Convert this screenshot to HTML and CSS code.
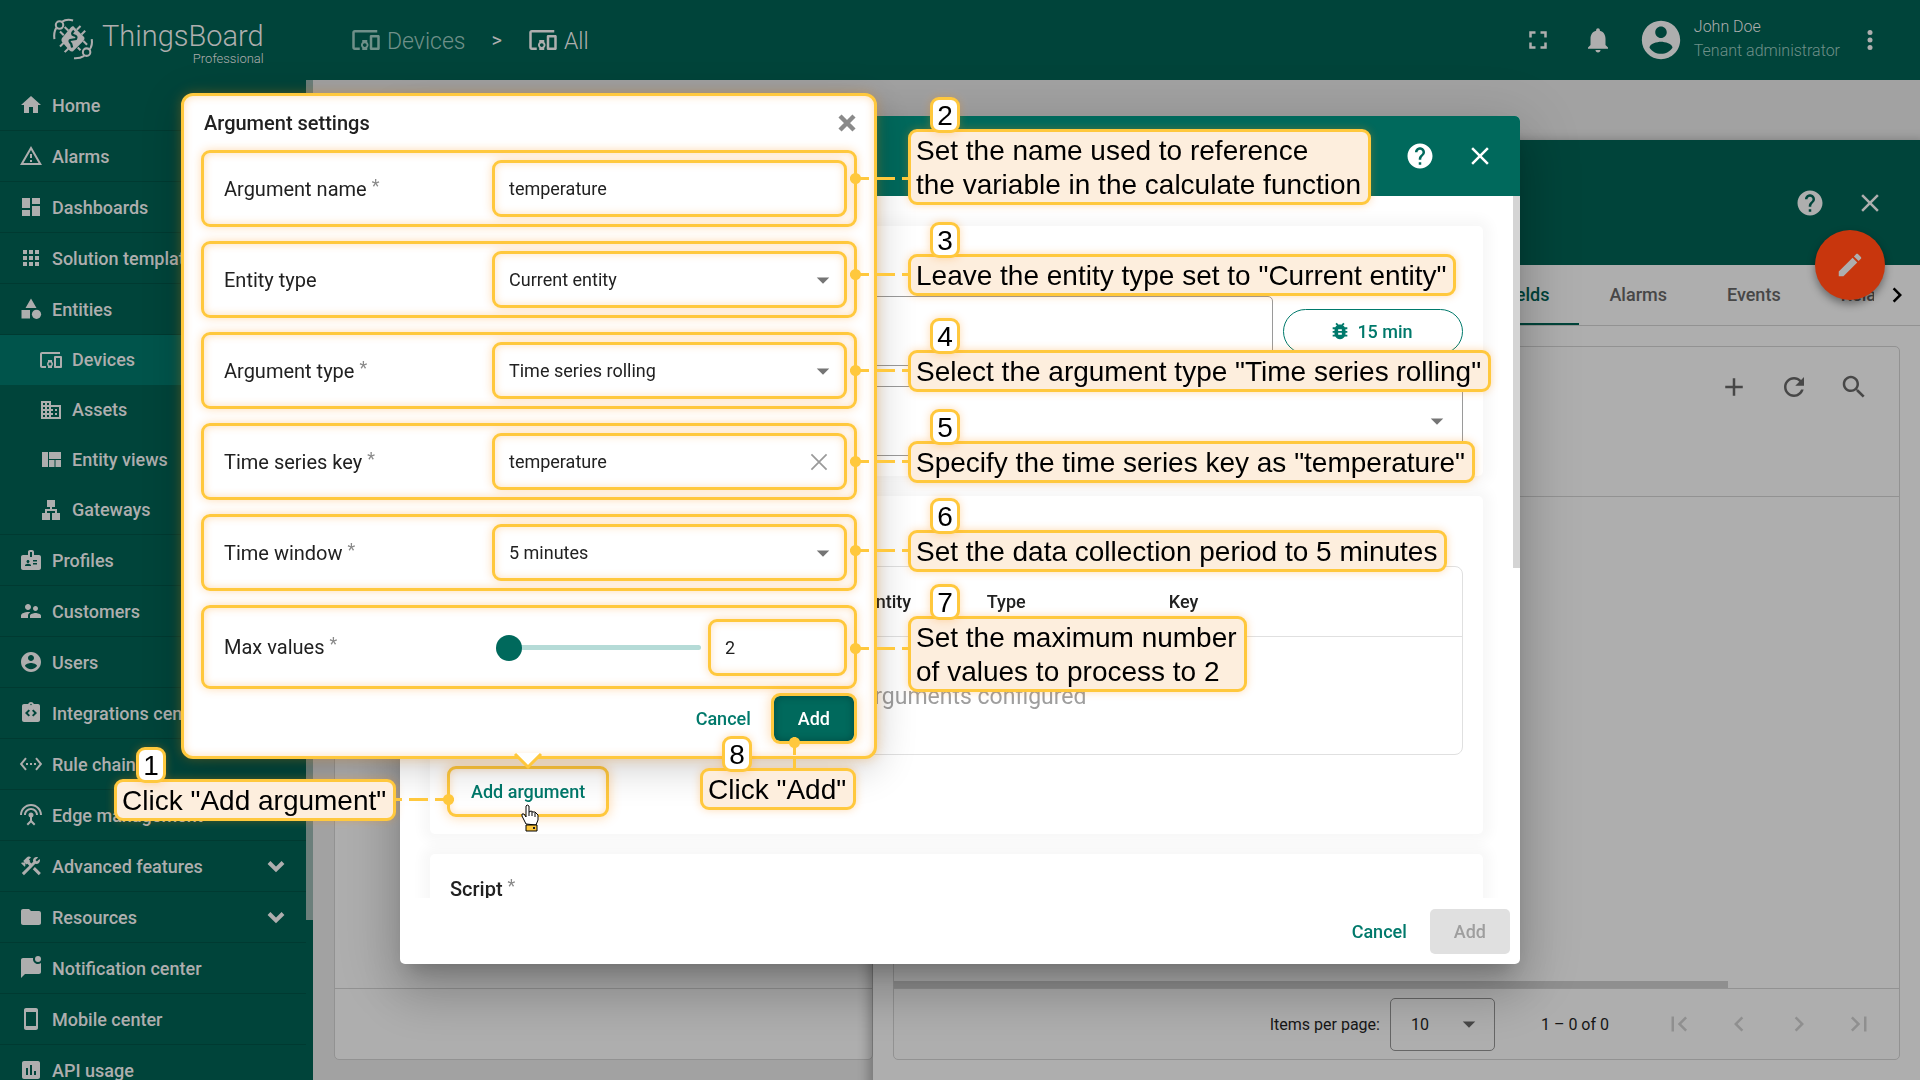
FILE: index.html
```html
<!DOCTYPE html>
<html lang="en">
<head>
<meta charset="utf-8">
<title>ThingsBoard – Argument settings</title>
<link rel="stylesheet" href="styles.css">
</head>
<body>
<svg class="sprite" aria-hidden="true">
  <symbol id="home" viewBox="0 0 24 24"><path d="M10 20v-6h4v6h5v-8h3L12 3 2 12h3v8z"/></symbol>
  <symbol id="warning" viewBox="0 0 24 24"><path d="M1 21h22L12 2 1 21zm3.47-2L12 5.99 19.53 19H4.47zM11 16h2v2h-2zm0-6h2v4h-2z"/></symbol>
  <symbol id="dashboard" viewBox="0 0 24 24"><path d="M3 13h8V3H3v10zm0 8h8v-6H3v6zm10 0h8V11h-8v10zm0-18v6h8V3h-8z"/></symbol>
  <symbol id="apps" viewBox="0 0 24 24"><path d="M4 8h4V4H4v4zm6 12h4v-4h-4v4zm-6 0h4v-4H4v4zm0-6h4v-4H4v4zm6 0h4v-4h-4v4zm6-10v4h4V4h-4zm-6 4h4V4h-4v4zm6 6h4v-4h-4v4zm0 6h4v-4h-4v4z"/></symbol>
  <symbol id="category" viewBox="0 0 24 24"><path d="M12 1.500l-5.500 9.500h11zM2.500 13h8.500v8.500H2.500z"/><circle cx="17.500" cy="17.300" r="4.600"/></symbol>
  <symbol id="devices" viewBox="0 0 24 24"><path d="M3 6h18V4H3c-1.100 0-2 .9-2 2v12c0 1.100.9 2 2 2h4v-2H3V6zm10 6H9v1.780c-.61.55-1 1.330-1 2.220s.39 1.670 1 2.220V20h4v-1.780c.61-.55 1-1.340 1-2.220s-.39-1.670-1-2.220V12zm-2 5.500c-.83 0-1.500-.67-1.500-1.500s.67-1.500 1.500-1.500 1.500.67 1.500 1.500-.67 1.500-1.500 1.500zM22 8h-6c-.5 0-1 .5-1 1v10c0 .5.5 1 1 1h6c.5 0 1-.5 1-1V9c0-.5-.5-1-1-1zm-1 10h-4v-8h4v8z"/></symbol>
  <symbol id="domain" viewBox="0 0 24 24"><path d="M12 7V3H2v18h20V7H12zM6 19H4v-2h2v2zm0-4H4v-2h2v2zm0-4H4V9h2v2zm0-4H4V5h2v2zm4 12H8v-2h2v2zm0-4H8v-2h2v2zm0-4H8V9h2v2zm0-4H8V5h2v2zm10 12h-8v-2h2v-2h-2v-2h2v-2h-2V9h8v10zm-2-8h-2v2h2v-2zm0 4h-2v2h2v-2z"/></symbol>
  <symbol id="quilt" viewBox="0 0 24 24"><path d="M3 4h6v15H3zM10 4h12v7H10zM10 12h5.500v7H10zM16.500 12H22v7h-5.500z"/></symbol>
  <symbol id="lan" viewBox="0 0 24 24"><path d="M13 22h8v-7h-3v-4h-5V9h3V2H8v7h3v2H6v4H3v7h8v-7H8v-2h8v2h-3z"/></symbol>
  <symbol id="badge" viewBox="0 0 24 24"><path d="M20 7h-5V4c0-1.100-.9-2-2-2h-2c-1.100 0-2 .9-2 2v3H4c-1.100 0-2 .9-2 2v11c0 1.100.9 2 2 2h16c1.100 0 2-.9 2-2V9c0-1.100-.9-2-2-2zM9 12c.83 0 1.500.67 1.500 1.500S9.830 15 9 15s-1.500-.67-1.500-1.500S8.170 12 9 12zm3 6H6v-.75c0-1 2-1.500 3-1.500s3 .5 3 1.500V18zm1-9h-2V4h2v5zm5 7.500h-4V15h4v1.500zm0-3h-4V12h4v1.500z"/></symbol>
  <symbol id="people" viewBox="0 0 24 24"><path d="M16.500 12c1.380 0 2.490-1.120 2.490-2.500S17.880 7 16.500 7C15.120 7 14 8.120 14 9.500s1.120 2.500 2.500 2.500zM9 11c1.660 0 2.990-1.340 2.990-3S10.660 5 9 5C7.340 5 6 6.340 6 8s1.340 3 3 3zm7.500 3c-1.830 0-5.500.92-5.500 2.750V19h11v-2.250c0-1.830-3.670-2.750-5.500-2.750zM9 13c-2.330 0-7 1.170-7 3.500V19h7v-2.250c0-.85.33-2.340 2.370-3.470C10.500 13.100 9.660 13 9 13z"/></symbol>
  <symbol id="account" viewBox="0 0 24 24"><path d="M12 2C6.480 2 2 6.480 2 12s4.480 10 10 10 10-4.480 10-10S17.520 2 12 2zm0 3c1.660 0 3 1.340 3 3s-1.340 3-3 3-3-1.340-3-3 1.340-3 3-3zm0 14.200c-2.500 0-4.710-1.280-6-3.220.03-1.990 4-3.080 6-3.080 1.990 0 5.970 1.090 6 3.080-1.290 1.940-3.500 3.220-6 3.220z"/></symbol>
  <symbol id="integration" viewBox="0 0 24 24"><path fill-rule="evenodd" d="M19 3h-4.180C14.400 1.840 13.300 1 12 1s-2.400.84-2.820 2H5c-1.100 0-2 .9-2 2v14c0 1.100.9 2 2 2h14c1.100 0 2-.9 2-2V5c0-1.100-.9-2-2-2zM11 14.170l-1.410 1.420L6 12l3.590-3.590L11 9.830 8.830 12 11 14.170zM12 4.250c-.41 0-.75-.34-.75-.75s.34-.75.75-.75.75.34.75.75-.34.75-.75.75zm2.410 11.340L13 14.170 15.170 12 13 9.830l1.410-1.420L18 12l-3.590 3.590z"/></symbol>
  <symbol id="rule" viewBox="0 0 24 24"><path d="M7.770 6.760L6.230 5.480.82 12l5.410 6.520 1.540-1.280L3.420 12l4.350-5.240zM7 13h2v-2H7v2zm10-2h-2v2h2v-2zm-6 2h2v-2h-2v2zm6.770-7.520l-1.540 1.280L20.580 12l-4.350 5.240 1.540 1.280L23.180 12l-5.410-6.520z"/></symbol>
  <symbol id="antenna" viewBox="0 0 24 24"><path d="M12 5c-3.870 0-7 3.130-7 7h2c0-2.760 2.240-5 5-5s5 2.240 5 5h2c0-3.870-3.130-7-7-7zm1 9.290c.88-.39 1.500-1.260 1.500-2.290 0-1.380-1.120-2.500-2.500-2.500S9.500 10.620 9.500 12c0 1.020.62 1.900 1.500 2.290v3.300L7.590 21 9 22.410l3-3 3 3L16.410 21 13 17.590v-3.300zM12 1C5.930 1 1 5.930 1 12h2c0-4.970 4.030-9 9-9s9 4.030 9 9h2c0-6.070-4.930-11-11-11z"/></symbol>
  <symbol id="tools" viewBox="0 0 24 24"><path d="M13.780 15.170l2.120-2.120 6 6-2.120 2.120zM17.500 10c1.930 0 3.500-1.570 3.500-3.500 0-.58-.16-1.120-.41-1.600l-2.700 2.700-1.490-1.490 2.700-2.700c-.48-.25-1.020-.41-1.600-.41C15.570 3 14 4.570 14 6.500c0 .41.08.8.21 1.160l-1.850 1.850-1.780-1.780.71-.71-1.410-1.410L12 3.490c-1.170-1.170-3.070-1.170-4.240 0L4.220 7.030l1.410 1.410H2.810l-.71.71 3.540 3.540.71-.71V9.150l1.410 1.410.71-.71 1.780 1.780-7.410 7.410 2.120 2.120L16.340 9.790c.36.13.75.21 1.160.21z"/></symbol>
  <symbol id="folder" viewBox="0 0 24 24"><path d="M10 4H4c-1.100 0-2 .9-2 2v12c0 1.100.9 2 2 2h16c1.100 0 2-.9 2-2V8c0-1.100-.9-2-2-2h-8l-2-2z"/></symbol>
  <symbol id="chat" viewBox="0 0 24 24"><path d="M22 6.980V16c0 1.100-.9 2-2 2H6l-4 4V4c0-1.100.9-2 2-2h10.100A5 5 0 0 0 22 6.980z"/><circle cx="19" cy="3" r="3"/></symbol>
  <symbol id="phone" viewBox="0 0 24 24"><path d="M17 1H7c-1.100 0-2 .9-2 2v18c0 1.100.9 2 2 2h10c1.100 0 2-.9 2-2V3c0-1.100-.9-2-2-2zm0 18H7V5h10v14z"/></symbol>
  <symbol id="chart" viewBox="0 0 24 24"><path d="M19 3H5c-1.100 0-2 .9-2 2v14c0 1.100.9 2 2 2h14c1.100 0 2-.9 2-2V5c0-1.100-.9-2-2-2zM9 17H7v-7h2v7zm4 0h-2V7h2v10zm4 0h-2v-4h2v4z"/></symbol>
  <symbol id="chevron-down" viewBox="0 0 24 24"><path d="M5 8.500l7 7 7-7" fill="none" stroke="currentColor" stroke-width="4"/></symbol>
  <symbol id="fullscreen" viewBox="0 0 24 24"><path d="M7 14H5v5h5v-2H7v-3zm-2-4h2V7h3V5H5v5zm12 7h-3v2h5v-5h-2v3zM14 5v2h3v3h2V5h-5z"/></symbol>
  <symbol id="bell" viewBox="0 0 24 24"><path d="M12 22c1.100 0 2-.9 2-2h-4c0 1.100.89 2 2 2zm6-6v-5c0-3.070-1.640-5.640-4.500-6.320V4c0-.83-.67-1.500-1.500-1.500s-1.500.67-1.500 1.500v.68C7.630 5.360 6 7.920 6 11v5l-2 2v1h16v-1l-2-2z"/></symbol>
  <symbol id="more" viewBox="0 0 24 24"><circle cx="12" cy="6" r="2"/><circle cx="12" cy="12" r="2"/><circle cx="12" cy="18" r="2"/></symbol>
  <symbol id="help" viewBox="0 0 24 24"><path d="M12 2C6.480 2 2 6.480 2 12s4.480 10 10 10 10-4.480 10-10S17.520 2 12 2zm1 17h-2v-2h2v2zm2.070-7.750l-.9.92C13.450 12.900 13 13.500 13 15h-2v-.5c0-1.100.45-2.100 1.170-2.830l1.240-1.260c.37-.36.59-.86.59-1.410 0-1.100-.9-2-2-2s-2 .9-2 2H8c0-2.210 1.790-4 4-4s4 1.790 4 4c0 .88-.36 1.680-.93 2.250z"/></symbol>
  <symbol id="close" viewBox="0 0 24 24"><path d="M19 6.410L17.590 5 12 10.590 6.410 5 5 6.410 10.590 12 5 17.590 6.410 19 12 13.410 17.590 19 19 17.590 13.410 12z"/></symbol>
  <symbol id="close-thin" viewBox="0 0 24 24"><path d="M5 5l14 14M19 5L5 19" fill="none" stroke="currentColor" stroke-width="1.600"/></symbol>
  <symbol id="close-bold" viewBox="0 0 24 24"><path d="M5 5l14 14M19 5L5 19" fill="none" stroke="currentColor" stroke-width="4.400"/></symbol>
  <symbol id="edit" viewBox="0 0 24 24"><path d="M3 17.250V21h3.750L17.810 9.940l-3.750-3.750L3 17.250zM20.710 7.040c.39-.39.39-1.020 0-1.410l-2.340-2.340c-.39-.39-1.020-.39-1.410 0l-1.830 1.830 3.750 3.750 1.830-1.830z"/></symbol>
  <symbol id="add" viewBox="0 0 24 24"><path d="M19 13h-6v6h-2v-6H5v-2h6V5h2v6h6v2z"/></symbol>
  <symbol id="refresh" viewBox="0 0 24 24"><path d="M17.650 6.350C16.200 4.900 14.210 4 12 4c-4.420 0-7.990 3.580-7.990 8s3.570 8 7.990 8c3.730 0 6.840-2.550 7.730-6h-2.080c-.82 2.330-3.040 4-5.650 4-3.310 0-6-2.690-6-6s2.690-6 6-6c1.660 0 3.140.69 4.220 1.780L13 11h7V4l-2.350 2.350z"/></symbol>
  <symbol id="search" viewBox="0 0 24 24"><path d="M15.500 14h-.79l-.28-.27C15.410 12.590 16 11.110 16 9.500 16 5.910 13.090 3 9.500 3S3 5.910 3 9.500 5.910 16 9.500 16c1.610 0 3.090-.59 4.230-1.570l.27.28v.79l5 4.990L20.490 19l-4.990-5zm-6 0C7.010 14 5 11.990 5 9.500S7.010 5 9.500 5 14 7.010 14 9.500 11.990 14 9.500 14z"/></symbol>
  <symbol id="first" viewBox="0 0 24 24"><path d="M18.410 16.590L13.820 12l4.590-4.590L17 6l-6 6 6 6zM6 6h2v12H6z"/></symbol>
  <symbol id="prev" viewBox="0 0 24 24"><path d="M15.410 7.410L14 6l-6 6 6 6 1.410-1.410L10.830 12z"/></symbol>
  <symbol id="next" viewBox="0 0 24 24"><path d="M10 6L8.590 7.410 13.170 12l-4.580 4.590L10 18l6-6z"/></symbol>
  <symbol id="last" viewBox="0 0 24 24"><path d="M5.590 7.410L10.180 12l-4.590 4.590L7 18l6-6-6-6zM16 6h2v12h-2z"/></symbol>
  <symbol id="arrow" viewBox="0 0 24 24"><path d="M7 10l5 5 5-5z"/></symbol>
  <symbol id="bug" viewBox="0 0 24 24"><path d="M20 8h-2.810c-.45-.78-1.070-1.450-1.820-1.960L17 4.410 15.590 3l-2.170 2.170C12.960 5.060 12.490 5 12 5s-.96.06-1.410.17L8.410 3 7 4.410l1.620 1.630C7.880 6.550 7.260 7.220 6.810 8H4v2h2.090c-.05.33-.09.66-.09 1v1H4v2h2v1c0 .34.04.67.09 1H4v2h2.810c1.040 1.790 2.970 3 5.190 3s4.150-1.210 5.190-3H20v-2h-2.090c.05-.33.09-.66.09-1v-1h2v-2h-2v-1c0-.34-.04-.67-.09-1H20V8zm-6 8h-4v-2h4v2zm0-4h-4v-2h4v2z"/></symbol>
</svg>

<div class="app">
  <header class="topbar">
    <a class="brand" href="#">
      <svg class="brand-mark" viewBox="0 0 60 60">
        <g fill="none" stroke="currentColor" stroke-width="2.200">
          <circle cx="14.500" cy="14" r="4"/><path d="M17 10.500Q22 7 29 9M11 17Q8 22 9 29"/>
          <circle cx="43.500" cy="43" r="4"/><path d="M41 47Q36 50 30 49.500M47 40Q50 35 49 29"/>
          <path d="M24 20l-4-4M19 25l-4-4M33 19l4-4M38 24l4-4M40 31l4 4M34 38l3 3M24 39l-4 4M19 33l-4 4"/>
        </g>
        <path d="M29 15l12 12q1 2-1 4L29 42q-2 1-4-1l-8-9q-1-2 0-4l10-12z"/>
        <path d="M30 20q-4 4 0 5t2 4l-6 1q-2 1 1 4l1 4" fill="none" stroke="#00443a" stroke-width="2.400"/>
      </svg>
      <span class="brand-text"><span class="brand-name">ThingsBoard</span><span class="brand-tier">Professional</span></span>
    </a>
    <nav class="crumbs">
      <a class="crumb faded" href="#"><svg><use href="#devices"/></svg><span>Devices</span></a>
      <span class="crumb-sep">&gt;</span>
      <a class="crumb" href="#"><svg><use href="#devices"/></svg><span>All</span></a>
    </nav>
    <div class="top-actions">
      <button class="icon-btn" aria-label="Fullscreen"><svg class="i30"><use href="#fullscreen"/></svg></button>
      <button class="icon-btn" aria-label="Notifications"><svg class="i30"><use href="#bell"/></svg></button>
      <div class="user">
        <svg class="avatar"><use href="#account"/></svg>
        <div class="user-text"><span>John Doe</span><span class="faded">Tenant administrator</span></div>
      </div>
      <button class="icon-btn" aria-label="More"><svg class="i30"><use href="#more"/></svg></button>
    </div>
  </header>

  <div class="workspace">
    <aside class="sidebar">
      <nav class="menu">
        <a class="item" href="#"><svg><use href="#home"/></svg>Home</a>
        <a class="item" href="#"><svg><use href="#warning"/></svg>Alarms</a>
        <a class="item" href="#"><svg><use href="#dashboard"/></svg>Dashboards</a>
        <a class="item" href="#"><svg><use href="#apps"/></svg>Solution templates</a>
        <a class="item" href="#"><svg><use href="#category"/></svg>Entities</a>
        <a class="item sub active" href="#"><svg><use href="#devices"/></svg>Devices</a>
        <a class="item sub" href="#"><svg><use href="#domain"/></svg>Assets</a>
        <a class="item sub" href="#"><svg><use href="#quilt"/></svg>Entity views</a>
        <a class="item sub end" href="#"><svg><use href="#lan"/></svg>Gateways</a>
        <a class="item" href="#"><svg><use href="#badge"/></svg>Profiles</a>
        <a class="item" href="#"><svg><use href="#people"/></svg>Customers</a>
        <a class="item" href="#"><svg><use href="#account"/></svg>Users</a>
        <a class="item" href="#"><svg><use href="#integration"/></svg>Integrations center</a>
        <a class="item" href="#"><svg><use href="#rule"/></svg>Rule chains</a>
        <a class="item" href="#"><svg><use href="#antenna"/></svg>Edge management<svg class="more"><use href="#chevron-down"/></svg></a>
        <a class="item" href="#"><svg><use href="#tools"/></svg>Advanced features<svg class="more"><use href="#chevron-down"/></svg></a>
        <a class="item" href="#"><svg><use href="#folder"/></svg>Resources<svg class="more"><use href="#chevron-down"/></svg></a>
        <a class="item" href="#"><svg><use href="#chat"/></svg>Notification center</a>
        <a class="item" href="#"><svg><use href="#phone"/></svg>Mobile center</a>
        <a class="item" href="#"><svg><use href="#chart"/></svg>API usage</a>
      </nav>
      <div class="rail"><div class="rail-thumb"></div></div>
    </aside>

    <main class="content">
      <section class="list-card"><div class="list-body"></div><div class="list-footer"></div></section>
      <section class="details">
        <header class="details-head">
          <button class="icon-btn" aria-label="Help"><svg class="i30"><use href="#help"/></svg></button>
          <button class="icon-btn" aria-label="Close"><svg class="i30"><use href="#close"/></svg></button>
          <button class="fab" aria-label="Edit"><svg class="i30"><use href="#edit"/></svg></button>
        </header>
        <div class="tabs">
          <div class="tab-strip">
            <button class="tab on">Calculated fields</button><button class="tab">Alarms</button><button class="tab">Events</button><button class="tab">Relations</button>
          </div>
          <button class="icon-btn tab-next" aria-label="Next tabs"><svg class="i30"><use href="#next"/></svg></button>
        </div>
        <div class="details-card">
          <div class="tools">
            <button class="icon-btn" aria-label="Add"><svg class="i30"><use href="#add"/></svg></button>
            <button class="icon-btn" aria-label="Refresh"><svg class="i30"><use href="#refresh"/></svg></button>
            <button class="icon-btn" aria-label="Search"><svg class="i30"><use href="#search"/></svg></button>
          </div>
          <div class="rows"><div class="hbar"></div></div>
          <footer class="pager">
            <label for="page-size">Items per page:</label>
            <span class="page-size"><select id="page-size"><option>10</option></select><svg class="i30"><use href="#arrow"/></svg></span>
            <span class="range">1 – 0 of 0</span>
            <div class="pager-btns">
              <button class="icon-btn" aria-label="First page"><svg class="i30"><use href="#first"/></svg></button>
              <button class="icon-btn" aria-label="Previous page"><svg class="i30"><use href="#prev"/></svg></button>
              <button class="icon-btn" aria-label="Next page"><svg class="i30"><use href="#next"/></svg></button>
              <button class="icon-btn" aria-label="Last page"><svg class="i30"><use href="#last"/></svg></button>
            </div>
          </footer>
        </div>
      </section>
    </main>
  </div>
</div>

<div class="overlay">
  <div class="dialog" role="dialog">
    <header class="dialog-head">
      <button class="icon-btn" aria-label="Help"><svg class="i30"><use href="#help"/></svg></button>
      <button class="icon-btn" aria-label="Close"><svg class="i30"><use href="#close"/></svg></button>
    </header>
    <div class="dialog-body">
      <div class="cards">
        <section class="card">
          <div class="card-title"></div>
          <div class="title-row">
            <input class="field" type="text" aria-label="Title">
            <button class="pill"><svg><use href="#bug"/></svg>15 min</button>
          </div>
          <span class="field-wrap"><select class="field" aria-label="Type"><option></option></select><svg class="i30"><use href="#arrow"/></svg></span>
        </section>
        <section class="card">
          <div class="card-title"></div>
          <div class="table-box">
            <table>
              <thead><tr><th class="c-name"></th><th class="c-entity">Entity</th><th class="c-type">Type</th><th class="c-key">Key</th></tr></thead>
              <tbody><tr><td colspan="4">No arguments configured</td></tr></tbody>
            </table>
          </div>
          <button class="btn text marked add-argument">Add argument</button>
        </section>
        <section class="card script"><h3>Script <span class="req">*</span></h3></section>
      </div>
      <div class="rail light"><div class="rail-thumb"></div></div>
    </div>
    <footer class="dialog-foot">
      <button class="btn text">Cancel</button>
      <button class="btn" disabled>Add</button>
    </footer>

    <form class="popup">
      <header class="popup-head"><h2>Argument settings</h2><button type="button" class="icon-btn" aria-label="Close"><svg class="i24"><use href="#close-bold"/></svg></button></header>
      <div class="settings">
        <div class="row"><label for="arg-name">Argument name <span class="req">*</span></label><span class="box"><input id="arg-name" type="text" value="temperature"></span></div>
        <div class="row"><label for="entity-type">Entity type</label><span class="box"><select id="entity-type"><option>Current entity</option></select><svg class="i30"><use href="#arrow"/></svg></span></div>
        <div class="row"><label for="arg-type">Argument type <span class="req">*</span></label><span class="box"><select id="arg-type"><option>Time series rolling</option></select><svg class="i30"><use href="#arrow"/></svg></span></div>
        <div class="row"><label for="ts-key">Time series key <span class="req">*</span></label><span class="box"><input id="ts-key" type="text" value="temperature"><svg class="clear"><use href="#close-thin"/></svg></span></div>
        <div class="row"><label for="window">Time window <span class="req">*</span></label><span class="box"><select id="window"><option>5 minutes</option></select><svg class="i30"><use href="#arrow"/></svg></span></div>
        <div class="row tall"><label for="max-values">Max values <span class="req">*</span></label><input class="slider" type="range" min="2" max="1000" value="2" aria-label="Max values slider"><span class="box small"><input id="max-values" type="text" value="2"></span></div>
      </div>
      <footer class="popup-foot"><button type="button" class="btn text">Cancel</button><button type="button" class="btn primary marked">Add</button></footer>
      <svg class="popup-tip" viewBox="0 0 28 16"><path d="M1 -3L14 10 27 -3z" fill="#fff"/><path d="M1 -2L14 11 27 -2" fill="none" stroke="#ffc83d" stroke-width="3"/></svg>
    </form>

    <div class="callout s1">Click "Add argument"<span class="num">1</span><i class="link right"></i></div>
    <div class="callout s2">Set the name used to reference<br>the variable in the calculate function<span class="num">2</span><i class="link"></i></div>
    <div class="callout s3">Leave the entity type set to "Current entity"<span class="num">3</span><i class="link"></i></div>
    <div class="callout s4">Select the argument type "Time series rolling"<span class="num">4</span><i class="link"></i></div>
    <div class="callout s5">Specify the time series key as "temperature"<span class="num">5</span><i class="link"></i></div>
    <div class="callout s6">Set the data collection period to 5 minutes<span class="num">6</span><i class="link"></i></div>
    <div class="callout s7">Set the maximum number<br>of values to process to 2<span class="num">7</span><i class="link"></i></div>
    <div class="callout s8">Click "Add"<span class="num">8</span><i class="link up"></i></div>

    <svg class="pointer" viewBox="0 0 18 28">
      <path d="M5 20L1 12q-1-3 2-2l2 3V2q1-2 3 0v6l2-1 2 1 2 0 2 2 1 1v5l-2 5z" fill="#fff" stroke="#000" stroke-width="1"/>
      <path d="M8 8v4M11 8v4M14 9v4" stroke="#000" fill="none"/>
      <path d="M5 21h11v6H5z" fill="#ffc83d" stroke="#000"/><path d="M12 23h2v2h-2z"/>
    </svg>
  </div>
</div>
</body>
</html>
```

FILE: styles.css
```css
:root {
  --green: #00695c;
  --green-text: #00796b;
  --green-dim: #00443a;
  --dim-white: #aeaeae;
  --dim-page: #a2a2a2;
  --dim-line: #929292;
  --mark: #ffc83d;
  --glow: rgba(255, 140, 0, .3);
}

* { box-sizing: border-box; }

body {
  margin: 0;
  font-family: Roboto, "Liberation Sans", sans-serif;
  font-size: 18px;
  color: #212121;
  overflow: hidden;
}

button, input, select { font: inherit; color: inherit; background: none; border: 0; padding: 0; margin: 0; outline: 0; }
select { appearance: none; }
button { display: inline-flex; align-items: center; justify-content: center; }
a { color: inherit; text-decoration: none; }
svg { fill: currentColor; flex: none; display: block; }
h2, h3 { margin: 0; font-size: 20px; font-weight: 500; line-height: 24px; }

.sprite { position: absolute; width: 0; height: 0; }
.i30 { width: 30px; height: 30px; }
.i24 { width: 24px; height: 24px; }
.icon-btn { width: 60px; height: 60px; }

/* page */
.app { height: 100vh; display: flex; flex-direction: column; background: var(--dim-page); }

.topbar {
  height: 80px;
  flex: none;
  display: flex;
  align-items: center;
  background: var(--green-dim);
  color: var(--dim-white);
  padding: 0 20px 0 46px;
}
.brand { display: flex; align-items: center; width: 305px; }
.brand-mark { width: 56px; height: 60px; }
.brand-text { display: flex; flex-direction: column; align-items: flex-end; padding-top: 6px; }
.brand-name { font-size: 29px; font-weight: 300; line-height: 32px; }
.brand-tier { font-size: 13px; font-weight: 300; line-height: 14px; }
.crumbs { display: flex; align-items: center; font-size: 23px; font-weight: 300; }
.crumb { display: flex; align-items: center; gap: 6px; line-height: 30px; }
.crumb span { padding-top: 4px; }
.crumb svg { width: 30px; height: 30px; }
.crumb-sep { padding: 0 26px; font-size: 20px; font-weight: 400; line-height: 24px; }
.faded { color: #6f9089; }
.top-actions { margin-left: auto; display: flex; align-items: center; }
.user { display: flex; align-items: center; gap: 10px; padding: 0 0 0 10px; }
.avatar { width: 46px; height: 46px; }
.user-text { display: flex; flex-direction: column; font-size: 16px; font-weight: 300; line-height: 24px; padding-bottom: 2px; }

.workspace { flex: 1; min-height: 0; display: flex; }

.sidebar { width: 313px; flex: none; display: flex; background: var(--green-dim); color: var(--dim-white); overflow: hidden; }
.menu { flex: 1; min-width: 0; display: flex; flex-direction: column; font-weight: 500; }
.item {
  height: 51px;
  flex: none;
  display: flex;
  align-items: center;
  gap: 9px;
  padding: 0 18px 0 19px;
  border-bottom: 1px solid #003a31;
  white-space: nowrap;
}
.item svg { width: 24px; height: 24px; }
.item .more { margin-left: auto; }
.item.sub { height: 50px; padding-left: 39px; border-bottom-color: transparent; }
.item.end { border-bottom-color: #003a31; }
.item.active { background: #00544b; }
.rail { width: 7px; }
.rail-thumb { height: 84%; background: #6b7f7b; }

.content { flex: 1; position: relative; display: flex; padding: 60px 0 0 21px; }
.list-card {
  flex: 1;
  display: flex;
  flex-direction: column;
  margin-bottom: 20px;
  border: 1px solid var(--dim-line);
  border-radius: 5px;
  background: var(--dim-white);
}
.list-body { flex: 1; }
.list-footer { height: 71px; border-top: 1px solid var(--dim-line); }

.details {
  width: 66%;
  flex: none;
  display: flex;
  flex-direction: column;
  background: var(--dim-white);
  box-shadow: 0 5px 10px 5px rgba(0, 0, 0, .25);
}
.details-head {
  height: 125px;
  display: flex;
  justify-content: flex-end;
  padding: 33px 20px 0;
  background: var(--green-dim);
  color: var(--dim-white);
  position: relative;
}
.fab {
  position: absolute;
  right: 35px;
  bottom: -35px;
  width: 70px;
  height: 70px;
  border-radius: 50%;
  background: #c8360d;
  color: var(--dim-white);
  box-shadow: 0 4px 8px rgba(0, 0, 0, .4);
}
.tabs { height: 61px; display: flex; border-bottom: 1px solid var(--dim-line); }
.tab-strip { flex: 1; min-width: 0; display: flex; justify-content: flex-end; overflow: hidden; }
.tab { flex: none; padding: 0 30px 2px; font-weight: 500; color: #474747; }
.tab.on { color: var(--green-dim); box-shadow: inset 0 -2px var(--green-dim); }
.tab:last-child { margin-right: -72px; }
.tab-next { width: 46px; color: #000; }
.details-card {
  flex: 1;
  display: flex;
  flex-direction: column;
  margin: 20px 20px 20px;
  border: 1px solid var(--dim-line);
  border-radius: 5px;
}
.tools { display: flex; justify-content: flex-end; padding: 10px 15px 0 0; height: 150px; color: #474747; border-bottom: 1px solid var(--dim-line); }
.rows { flex: 1; display: flex; align-items: flex-end; }
.hbar { width: 83%; height: 7px; background: #8f8f8f; }
.pager {
  height: 71px;
  display: flex;
  align-items: center;
  justify-content: flex-end;
  border-top: 1px solid var(--dim-line);
  font-size: 16px;
  color: #161616;
  padding-right: 10px;
}
.page-size { display: flex; align-items: center; margin: 0 46px 0 10px; width: 105px; height: 53px; border: 1px solid #666; border-radius: 5px; position: relative; }
.page-size select { width: 100%; height: 100%; padding-left: 20px; }
.page-size svg { position: absolute; right: 10px; color: #474747; pointer-events: none; }
.pager-btns { display: flex; margin-left: 40px; color: #8f8f8f; }

/* dialog */
.overlay { position: fixed; inset: 0; display: grid; place-items: center; }
.dialog {
  position: relative;
  width: 1120px;
  max-width: 90vw;
  height: calc(100vh - 232px);
  display: flex;
  flex-direction: column;
  background: #fff;
  border-radius: 5px;
  box-shadow: 0 14px 19px -9px rgba(0, 0, 0, .2), 0 30px 48px 4px rgba(0, 0, 0, .14), 0 11px 58px 10px rgba(0, 0, 0, .12);
}
.dialog-head {
  height: 80px;
  flex: none;
  display: flex;
  align-items: center;
  justify-content: flex-end;
  padding-right: 10px;
  background: var(--green);
  color: #fff;
  border-radius: 5px 5px 0 0;
}
.dialog-body { flex: 1; min-height: 0; display: flex; overflow: hidden; }
.cards { flex: 1; display: flex; flex-direction: column; gap: 20px; padding: 30px; }
.card {
  flex: none;
  display: flex;
  flex-direction: column;
  align-items: stretch;
  padding: 20px;
  background: #fff;
  border-radius: 5px;
  box-shadow: 0 0 12px 8px rgba(0, 0, 0, .03);
}
.card-title { height: 50px; }
.title-row { display: flex; align-items: center; gap: 10px; margin-bottom: 20px; }
.field { flex: 1; width: 100%; height: 70px; border: 1px solid #9a9a9a; border-radius: 5px; padding: 0 20px; }
.field-wrap { position: relative; display: flex; align-items: center; }
.field-wrap svg { position: absolute; right: 11px; color: #757575; }
.pill { width: 180px; height: 45px; gap: 6px; padding-right: 4px; border: 1px solid var(--green-text); border-radius: 23px; color: var(--green-text); font-weight: 500; }
.pill svg { width: 22px; height: 22px; }
.table-box { border: 1px solid #e0e0e0; border-radius: 8px; margin-bottom: 14px; }
table { width: 100%; table-layout: fixed; border-collapse: collapse; }
th { height: 69px; padding: 0; text-align: left; font-weight: 500; border-bottom: 1px solid #e0e0e0; }
.c-name { width: 41%; }
.c-entity { width: 12%; }
.c-type { width: 18%; }
td { height: 118px; padding: 2px 0 0; text-align: center; font-size: 23px; color: #9e9e9e; }
.card.script { height: 480px; padding-top: 23px; }
.req { color: #8a8a8a; font-size: 18px; font-weight: 400; vertical-align: 4px; line-height: 12px; }
.rail.light .rail-thumb { height: 53%; background: #d4d4d4; }
.dialog-foot { height: 66px; flex: none; display: flex; justify-content: flex-end; gap: 2px; padding: 11px 10px 10px; }

.btn { height: 45px; padding: 0 24px; border-radius: 5px; font-size: 18px; font-weight: 500; }
.btn.text { color: var(--green-text); padding: 0 21px; }
.btn.primary { background: var(--green); color: #fff; }
.btn:disabled { background: #e0e0e0; color: #9e9e9e; }
.marked { outline: 3px solid var(--mark); box-shadow: 0 0 12px 4px var(--glow), inset 0 0 8px rgba(255, 140, 0, .25); border-radius: 6px; }
.primary.marked { box-shadow: 0 0 12px 4px var(--glow), inset 0 0 8px rgba(0, 0, 0, .3); }
.add-argument { align-self: flex-start; }

/* argument popup, floats beside the button that opens it */
.popup {
  position: absolute;
  left: -219px;
  top: -23px;
  width: 696px;
  border: 3px solid var(--mark);
  border-radius: 12px;
  padding: 0 17px 15px;
  background: #fff;
  box-shadow: 0 0 12px var(--glow), 0 8px 40px rgba(0, 0, 0, .2), inset 0 0 8px var(--glow);
}
.popup-head { height: 54px; display: flex; align-items: center; justify-content: space-between; padding: 0 0 0 3px; }
.popup-head .icon-btn { width: 20px; height: 24px; color: #8a8a8a; }
.settings { display: flex; flex-direction: column; gap: 14px; }
.row {
  height: 77px;
  display: flex;
  align-items: center;
  justify-content: space-between;
  padding: 0 7px 0 20px;
  border: 3px solid var(--mark);
  border-radius: 9px;
  box-shadow: 0 0 10px var(--glow), inset 0 0 8px var(--glow);
}
.row.tall { height: 84px; }
.row label { flex: 1; font-size: 20px; line-height: 24px; }
.box {
  position: relative;
  width: 355px;
  height: 57px;
  display: flex;
  align-items: center;
  border: 3px solid var(--mark);
  border-radius: 9px;
  background: #fff;
  box-shadow: 0 0 10px var(--glow), inset 0 0 8px rgba(255, 140, 0, .25);
}
.box.small { width: 139px; margin-left: 7px; }
.box input, .box select { width: 100%; height: 100%; padding-left: 14px; font-size: 18px; }
.box svg { position: absolute; right: 6px; color: #757575; pointer-events: none; }
.box .clear { width: 26px; height: 26px; right: 12px; color: #9a9a9a; }
.slider { appearance: none; width: 205px; height: 26px; }
.slider::-webkit-slider-runnable-track { height: 5px; border-radius: 3px; background: #b5dbd7; }
.slider::-webkit-slider-thumb { appearance: none; width: 26px; height: 26px; margin-top: -10px; border-radius: 50%; background: var(--green); }
.popup-foot { display: flex; justify-content: flex-end; gap: 2px; padding: 7px 3px 0; }
.popup-tip { position: absolute; left: 330px; top: 100%; width: 28px; height: 16px; overflow: visible; }

/* numbered callouts */
.callout {
  position: absolute;
  padding: 2px 7px 0 5px;
  border: 3px solid var(--mark);
  border-radius: 9px;
  background: #fdeedd;
  color: #000;
  font-family: "Liberation Sans", Arial, sans-serif;
  font-size: 28px;
  line-height: 34px;
  white-space: nowrap;
  box-shadow: 0 0 8px var(--glow);
}
.num {
  position: absolute;
  left: 19px;
  top: -35px;
  width: 30px;
  height: 36px;
  border: 3px solid var(--mark);
  border-radius: 9px;
  background: #fff;
  line-height: 32px;
  text-align: center;
  box-shadow: 0 0 8px var(--glow);
}
.link {
  position: absolute;
  right: 100%;
  top: calc(50% - 2px);
  width: 61px;
  height: 3px;
  background: repeating-linear-gradient(90deg, var(--mark) 0 19px, transparent 19px 26px);
}
.link::before { content: ""; position: absolute; left: 0; top: -4px; width: 11px; height: 11px; border-radius: 50%; background: var(--mark); }
.link.right { left: 100%; right: auto; transform: rotate(180deg); }
.link.up {
  left: 90px;
  right: auto;
  top: -34px;
  width: 3px;
  height: 31px;
  background: repeating-linear-gradient(180deg, var(--mark) 0 18px, transparent 18px 22px);
}
.link.up::before { left: -4px; top: 0; }

.s1 { left: -286px; top: 663px; }
.s2 { left: 508px; top: 13px; }
.s2 .link { top: 45px; }
.s3 { left: 508px; top: 138px; }
.s4 { left: 508px; top: 234px; }
.s5 { left: 508px; top: 325px; }
.s6 { left: 508px; top: 414px; }
.s7 { left: 508px; top: 500px; }
.s7 .link { top: 28px; }
.s8 { left: 300px; top: 652px; }

.pointer { position: absolute; left: 121px; top: 688px; width: 18px; height: 28px; }
```
